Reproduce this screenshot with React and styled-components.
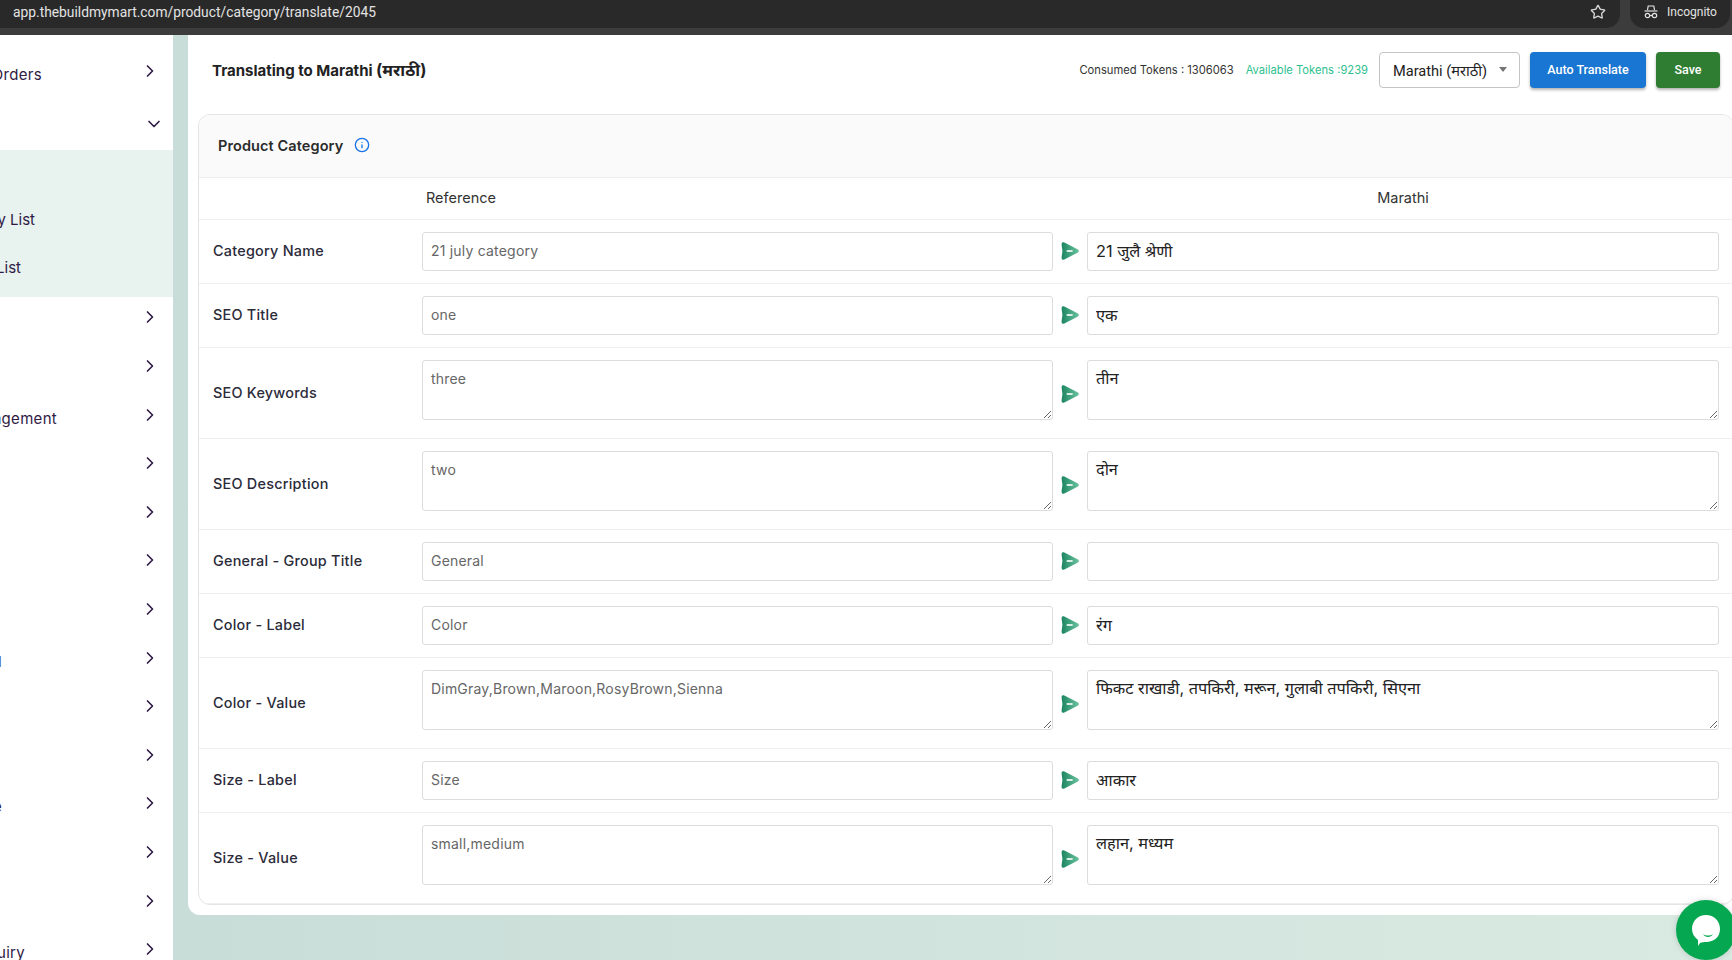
import React from 'react'
import styled, { createGlobalStyle } from 'styled-components'
import { ChevronRight, ChevronDown, Info, Star } from 'lucide-react'

const Global = createGlobalStyle`
  html, body { margin: 0; padding: 0; height: 100%; overflow: hidden; }
  * { box-sizing: border-box; }
  body { font-family: Inter, "Noto Sans", "Noto Sans Devanagari", sans-serif; background: #fff; }
`

const Page = styled.div`
  width: 1732px;
  height: 960px;
  overflow: hidden;
  display: flex;
  flex-direction: column;
  position: relative;
`

const Chrome = styled.div`
  height: 35px;
  flex: none;
  background: #3c3c3c;
  display: flex;
  align-items: flex-start;
  gap: 10px;
`
const Omnibox = styled.div`
  flex: 1;
  height: 28px;
  background: #292929;
  border-radius: 0 0 14px 0;
  display: flex;
  align-items: center;
  justify-content: space-between;
  padding: 0 14px 5px 13px;
`
const Url = styled.span`
  font-family: Roboto, sans-serif;
  font-size: 13.8px;
  color: #e3e3e3;
`
const IncognitoPill = styled.div`
  width: 100px;
  height: 28px;
  margin-right: 2px;
  background: #292929;
  border-radius: 0 0 14px 14px;
  display: flex;
  align-items: center;
  gap: 8px;
  padding: 0 0 5px 13px;
  font-family: Roboto, sans-serif;
  font-size: 12px;
  color: #e3e3e3;
`

const Body = styled.div`
  flex: 1;
  display: flex;
  min-height: 0;
`

const Sidebar = styled.nav`
  width: 173px;
  flex: none;
  background: #fff;
  overflow: hidden;
  padding-top: 15px;
`
const NavItem = styled.div`
  height: ${p => p.$h || 48.6}px;
  display: flex;
  align-items: center;
  justify-content: flex-end;
  padding-right: ${p => p.$down ? 9 : 13}px;
  color: #2f1a45;
  svg { margin-top: ${p => p.$down ? 0 : -7}px; }
`
/* the sidebar is scrolled sideways: labels end at $end and run off its left edge */
const NavLabel = styled.span`
  width: ${p => p.$end}px;
  margin-right: auto;
  display: flex;
  justify-content: flex-end;
  font-size: 15px;
  letter-spacing: .3px;
  white-space: nowrap;
  color: #2f1a45;
`
const SubBlock = styled.div`
  height: 147px;
  background: #e8f2ef;
  display: flex;
  flex-direction: column;
  justify-content: flex-end;
  padding-bottom: 4px;
`
const SubItem = styled.div`
  height: ${p => p.$h || 48.6}px;
  display: flex;
  align-items: center;
  justify-content: flex-end;
  width: ${p => p.$end}px;
  font-size: 15px;
  color: #2f1a45;
  white-space: nowrap;
`

const Content = styled.div`
  flex: 1;
  min-width: 0;
  padding-left: 15px;
  background: linear-gradient(90deg, #c9ddd8 0%, #d9eae2 100%);
`
const Panel = styled.main`
  height: 880px;
  background: #fff;
  border-radius: 0 0 0 12px;
  padding: 0 0 0 10px;
`
const TopRow = styled.div`
  height: 69px;
  margin-bottom: 10px;
  display: flex;
  align-items: center;
  padding: 0 12px 0 14px;
  gap: 10px;
`
const PageTitle = styled.h1`
  margin: 0 auto 0 0;
  font-size: 15px;
  font-weight: 700;
  color: #222;
  span { font-size: 16.5px; }
`
const Tokens = styled.span`
  font-size: 11.2px;
  color: ${p => p.$green ? '#2fbf8f' : '#333'};
  margin-right: 2px;
`
const LangSelect = styled.div`
  width: 141px;
  height: 36px;
  border: 1px solid #c4c4c4;
  border-radius: 4px;
  display: flex;
  align-items: center;
  justify-content: space-between;
  padding: 0 12px 0 13px;
  font-family: Roboto, "Noto Sans", sans-serif;
  font-size: 14.6px;
  color: #222;
  margin-left: -1px;
`
const Caret = styled.i`
  width: 0;
  height: 0;
  border-left: 4px solid transparent;
  border-right: 4px solid transparent;
  border-top: 5px solid #757575;
`
const Btn = styled.button`
  height: 36px;
  padding: 0;
  width: ${p => p.$w}px;
  border: 0;
  border-radius: 4px;
  background: ${p => p.$bg};
  color: #fff;
  font-family: Roboto, sans-serif;
  font-size: 12.5px;
  font-weight: 500;
  box-shadow: 0 2px 3px rgba(0,0,0,.3);
`

const Card = styled.section`
  width: 1536px;
  height: 791px;
  border: 1px solid #e4e4e4;
  border-radius: 12px;
  overflow: hidden;
`
const CardHead = styled.div`
  height: 63px;
  background: #fafafa;
  border-bottom: 1px solid #ececec;
  display: flex;
  align-items: center;
  gap: 11px;
  padding: 0 0 2px 19px;
  font-size: 14.5px;
  font-weight: 600;
  letter-spacing: .1px;
  color: #2b2b2b;
  svg { color: #1a73e8; }
`
const Row = styled.div`
  display: grid;
  grid-template-columns: 223px 631px 34px 632px;
  align-items: center;
  height: ${p => p.$h}px;
  border-bottom: 1px solid #eeeeee;
`
const HeadCell = styled.div`
  font-size: 14.5px;
  color: #333;
  text-align: ${p => p.$center ? 'center' : 'left'};
  padding: 0 0 2px ${p => p.$center ? 0 : 4}px;
`
const Label = styled.label`
  padding: 0 0 2px 14px;
  font-size: 14.4px;
  font-weight: 500;
  letter-spacing: .25px;
  color: #2b2b3a;
`
const fieldCss = `
  display: block;
  width: 100%;
  border: 1px solid #dcdcdc;
  border-radius: 3px;
  background: #fff;
  font-family: Inter, "Noto Sans", "Noto Sans Devanagari", sans-serif;
  outline: none;
`
const Field = styled.input`
  ${fieldCss}
  height: 39px;
  padding: 0 8px 2px;
  font-size: ${p => p.$src ? 14 : 16.3}px;
  letter-spacing: ${p => p.$src ? '.2px' : 0};
  color: ${p => p.$src ? '#666' : '#222'};
`
const Area = styled.textarea`
  ${fieldCss}
  height: 60px;
  margin-bottom: 6px;
  padding: ${p => p.$src ? 9 : 6}px 8px 0;
  font-size: ${p => p.$src ? 14 : 16.3}px;
  letter-spacing: ${p => p.$src ? '.2px' : 0};
  color: ${p => p.$src ? '#666' : '#222'};
`
const SendWrap = styled.div`
  display: flex;
  justify-content: center;
  padding-right: 1px;
  margin-top: ${p => p.$area ? 1 : -2}px;
`
const ChatBubble = styled.div`
  position: absolute;
  left: 1676px;
  top: 900px;
  width: 60px;
  height: 60px;
  border-radius: 50%;
  background: #05a851;
  display: flex;
  align-items: center;
  justify-content: center;
  box-shadow: 0 0 6px rgba(0,0,0,.15);
`

function SendIcon() {
  return (
    <svg width="18" height="18" viewBox="0 0 18 18">
      <defs>
        <linearGradient id="sendGrad" x1="0" y1="0" x2="1" y2="0">
          <stop offset="0" stopColor="#1c8560" />
          <stop offset="1" stopColor="#6cc3a0" />
        </linearGradient>
      </defs>
      <path d="M.6 2 C.6 .4 2 -.1 3.4 .5 L17 7.6 C18.2 8.3 18.2 9.7 17 10.4 L3.4 17.5 C2 18.1 .6 17.6 .6 16 C.6 13.5 1.4 11 1.4 9 C1.4 7 .6 4.5 .6 2 Z" fill="url(#sendGrad)" />
      <rect x="5.6" y="8.1" width="6.2" height="1.8" rx=".6" fill="#d7efe4" />
    </svg>
  )
}

function IncognitoIcon() {
  return (
    <svg width="16" height="16" viewBox="0 0 16 16" fill="none" stroke="#e3e3e3" strokeWidth="1.2">
      <path d="M4.5 6 L5.2 2 H10.8 L11.5 6" />
      <path d="M1.5 7 H14.5" />
      <circle cx="4.5" cy="11.5" r="2.2" />
      <circle cx="11.5" cy="11.5" r="2.2" />
      <path d="M6.7 11.5 H9.3" />
    </svg>
  )
}

const navTail = [
  null, null, { text: 'Management', end: 57 }, null, null, null, null,
  { text: 'l', end: 2 }, null, null, { text: 'e', end: 2 }, null, null, { text: 'Enquiry', end: 25 },
]

const rows = [
  { label: 'Category Name', src: '21 july category', val: '21 जुलै श्रेणी' },
  { label: 'SEO Title', src: 'one', val: 'एक' },
  { label: 'SEO Keywords', src: 'three', val: 'तीन', area: true },
  { label: 'SEO Description', src: 'two', val: 'दोन', area: true },
  { label: 'General - Group Title', src: 'General', val: '' },
  { label: 'Color - Label', src: 'Color', val: 'रंग' },
  { label: 'Color - Value', src: 'DimGray,Brown,Maroon,RosyBrown,Sienna', val: 'फिकट राखाडी, तपकिरी, मरून, गुलाबी तपकिरी, सिएना', area: true },
  { label: 'Size - Label', src: 'Size', val: 'आकार' },
  { label: 'Size - Value', src: 'small,medium', val: 'लहान, मध्यम', area: true },
]

export default function App() {
  return (
    <Page>
      <Global />
      <Chrome>
        <Omnibox>
          <Url>app.thebuildmymart.com/product/category/translate/2045</Url>
          <Star size={16} color="#d8d8d8" />
        </Omnibox>
        <IncognitoPill><IncognitoIcon />Incognito</IncognitoPill>
      </Chrome>
      <Body>
        <Sidebar>
          <NavItem>
            <NavLabel $end={42}>Orders</NavLabel>
            <ChevronRight size={20} strokeWidth={2} />
          </NavItem>
          <NavItem $h={51} $down>
            <ChevronDown size={20} strokeWidth={2} />
          </NavItem>
          <SubBlock>
            <SubItem $end={35} $h={46} />
            <SubItem $end={35}>y List</SubItem>
            <SubItem $end={21} $h={50}>List</SubItem>
          </SubBlock>
          {navTail.map((item, i) => (
            <NavItem key={i}>
              {item ? <NavLabel $end={item.end}>{item.text}</NavLabel> : null}
              <ChevronRight size={20} strokeWidth={2} />
            </NavItem>
          ))}
        </Sidebar>
        <Content>
          <Panel>
            <TopRow>
              <PageTitle>Translating to Marathi <span>(मराठी)</span></PageTitle>
              <Tokens>Consumed Tokens : 1306063</Tokens>
              <Tokens $green>Available Tokens :9239</Tokens>
              <LangSelect>Marathi (मराठी)<Caret /></LangSelect>
              <Btn $w={116} $bg="#1976d2">Auto Translate</Btn>
              <Btn $w={64} $bg="#2e7d32">Save</Btn>
            </TopRow>
            <Card>
              <CardHead>Product Category <Info size={16} /></CardHead>
              <Row $h={42}>
                <span />
                <HeadCell>Reference</HeadCell>
                <span />
                <HeadCell $center>Marathi</HeadCell>
              </Row>
              {rows.map(r => (
                <Row key={r.label} $h={r.area ? 91 : 64}>
                  <Label>{r.label}</Label>
                  {r.area ? <Area $src readOnly value={r.src} /> : <Field $src readOnly value={r.src} />}
                  <SendWrap $area={r.area}><SendIcon /></SendWrap>
                  {r.area ? <Area readOnly value={r.val} /> : <Field readOnly value={r.val} />}
                </Row>
              ))}
            </Card>
          </Panel>
        </Content>
      </Body>
      <ChatBubble>
        <svg width="32" height="34" viewBox="0 0 32 34">
          <path d="M16 2 C24 2 30 8 30 16 C30 24 24 29 16 29 C14 29 12 29 10 30 L8 33 L8 27 C4 24 2 20 2 16 C2 8 8 2 16 2 Z" fill="#fff" />
          <path d="M13 21 C16 23 20 23 23 21 C21 25 15 25 13 21 Z" fill="#05a851" />
        </svg>
      </ChatBubble>
    </Page>
  )
}
